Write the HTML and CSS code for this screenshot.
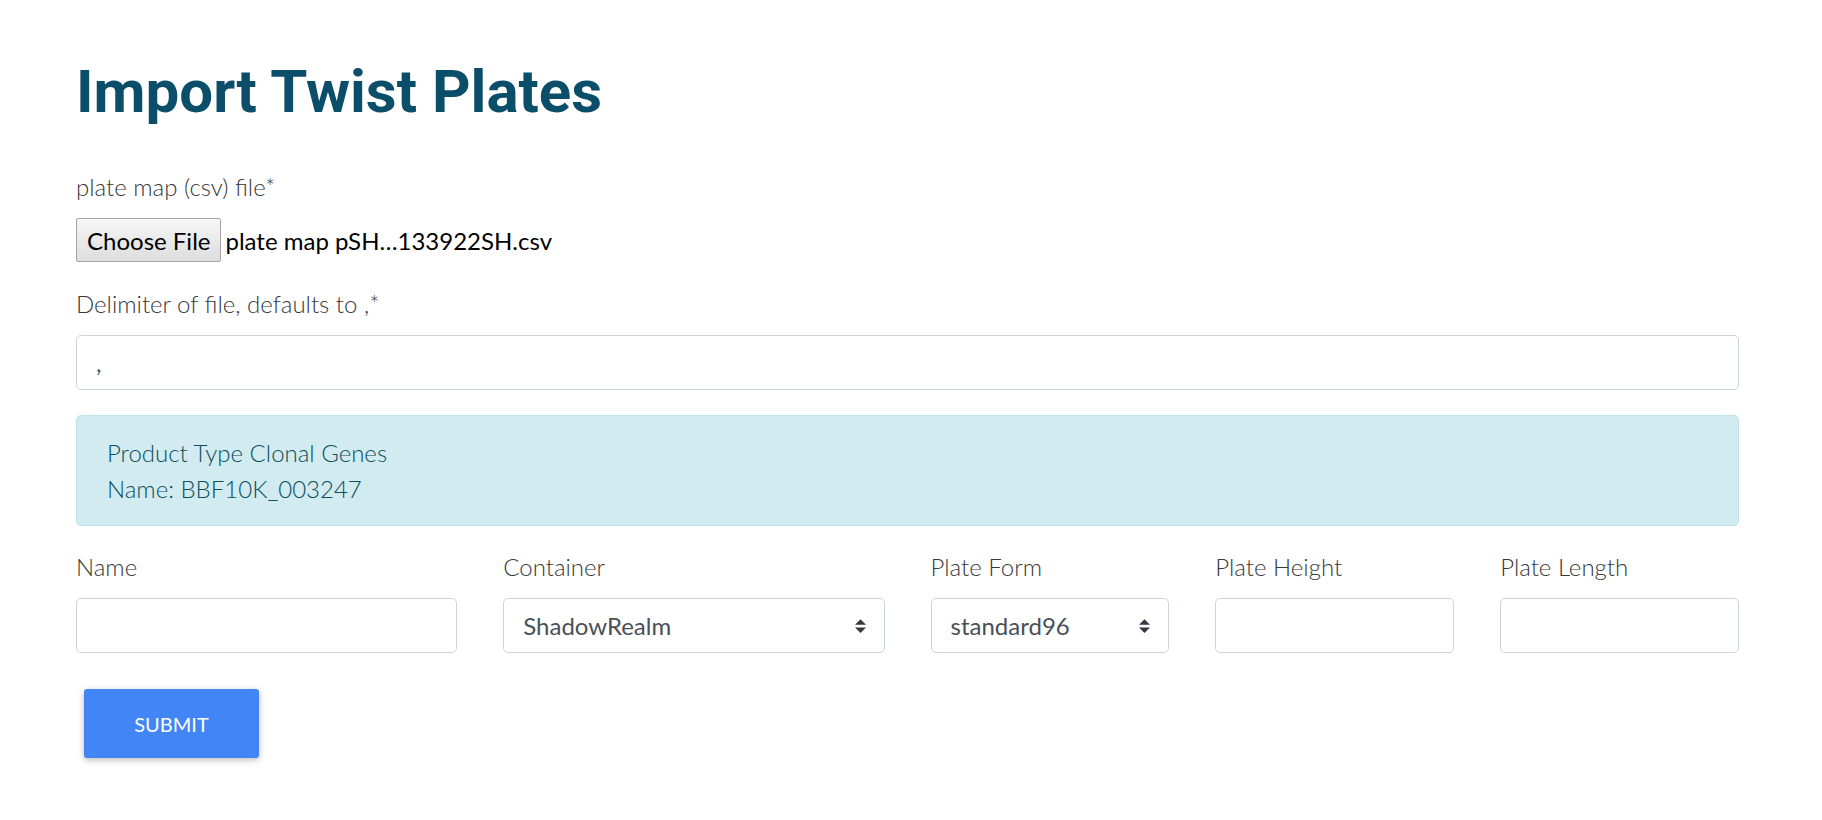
FILE: index.html
```html
<!DOCTYPE html>
<html lang="en">
<head>
<meta charset="utf-8">
<title>Import Twist Plates</title>
<link rel="stylesheet" href="styles.css">
</head>
<body>
<main class="page">
  <h1 class="title">Import Twist Plates</h1>
  <form class="form">
    <div class="group">
      <label class="label">plate map (csv) file*</label>
      <div class="file">
        <button type="button" class="file-btn">Choose File</button>
        <span class="file-name">plate map pSH…133922SH.csv</span>
      </div>
    </div>
    <div class="group group-wide">
      <label class="label">Delimiter of file, defaults to ,*</label>
      <input class="control" type="text" value=",">
    </div>
    <div class="alert">
      <div>Product Type Clonal Genes</div>
      <div>Name: BBF10K_003247</div>
    </div>
    <div class="row">
      <div class="col col-3">
        <label class="label">Name</label>
        <input class="control" type="text">
      </div>
      <div class="col col-3">
        <label class="label">Container</label>
        <div class="select-wrap">
          <select class="control select"><option>ShadowRealm</option></select>
          <svg class="select-icon" viewBox="0 0 4 5" width="11" height="14"><path d="M2 0L0 2h4zm0 5L0 3h4z" fill="#343a40"/></svg>
        </div>
      </div>
      <div class="col col-2">
        <label class="label">Plate Form</label>
        <div class="select-wrap">
          <select class="control select"><option>standard96</option></select>
          <svg class="select-icon" viewBox="0 0 4 5" width="11" height="14"><path d="M2 0L0 2h4zm0 5L0 3h4z" fill="#343a40"/></svg>
        </div>
      </div>
      <div class="col col-2">
        <label class="label">Plate Height</label>
        <input class="control" type="text">
      </div>
      <div class="col col-2">
        <label class="label">Plate Length</label>
        <input class="control" type="text">
      </div>
    </div>
    <button type="button" class="submit">Submit</button>
  </form>
</main>
</body>
</html>
```

FILE: styles.css
```css
* { box-sizing: border-box; }

body {
  margin: 0;
  background: #fff;
  font-family: Lato, "Open Sans", sans-serif;
}

.page {
  padding: 0 83px 40px 76px;
}

.title {
  font-family: Roboto, "Liberation Sans", sans-serif;
  font-weight: 700;
  font-size: 60px;
  line-height: 72px;
  margin: 56px 0 42px;
  color: #0b4e69;
}

.group {
  margin-bottom: 25px;
}

.label {
  display: block;
  font-family: Lato, sans-serif;
  font-weight: 300;
  font-size: 24px;
  line-height: 33px;
  color: #383838;
  margin-bottom: 15px;
}

.file {
  display: flex;
  align-items: center;
}

.file-btn {
  height: 44px;
  padding: 0 10px;
  font-family: Lato, sans-serif;
  font-size: 24px;
  color: #000;
  background: linear-gradient(#f7f7f7, #dddddd);
  border: 1px solid #a6a6a6;
  border-radius: 2px;
}

.file-name {
  margin-left: 4px;
  font-family: Lato, sans-serif;
  font-size: 24px;
  color: #000;
}

.control {
  display: block;
  width: 100%;
  height: 55px;
  padding: 0 19px;
  font-family: Lato, sans-serif;
  font-size: 24px;
  color: #495057;
  background: #fff;
  border: 1px solid #ced3da;
  border-radius: 5px;
  outline: none;
}

.alert {
  padding: 19px 30px;
  margin-bottom: 24px;
  background: #d1ebf0;
  border: 1px solid #bee4ea;
  border-radius: 5px;
  color: #0b4f5b;
  font-weight: 300;
  font-size: 24px;
  line-height: 35.5px;
}

.row {
  display: flex;
  margin: 0 -23px;
}

.col {
  padding: 0 23px;
}

.col-3 { width: 25%; }
.col-2 { width: 16.6667%; }

.select-wrap {
  position: relative;
}

.select {
  appearance: none;
  -webkit-appearance: none;
}

.select-icon {
  position: absolute;
  right: 19px;
  top: 21px;
  pointer-events: none;
}

.submit {
  display: block;
  margin: 36px 8px 9px;
  height: 69px;
  width: 175px;
  padding: 0;
  font-family: Lato, sans-serif;
  font-size: 20px;
  text-transform: uppercase;
  color: #fff;
  background: #4285f4;
  border: none;
  border-radius: 3px;
  box-shadow: 0 2px 5px 0 rgba(0,0,0,.16), 0 2px 10px 0 rgba(0,0,0,.12);
}
```
